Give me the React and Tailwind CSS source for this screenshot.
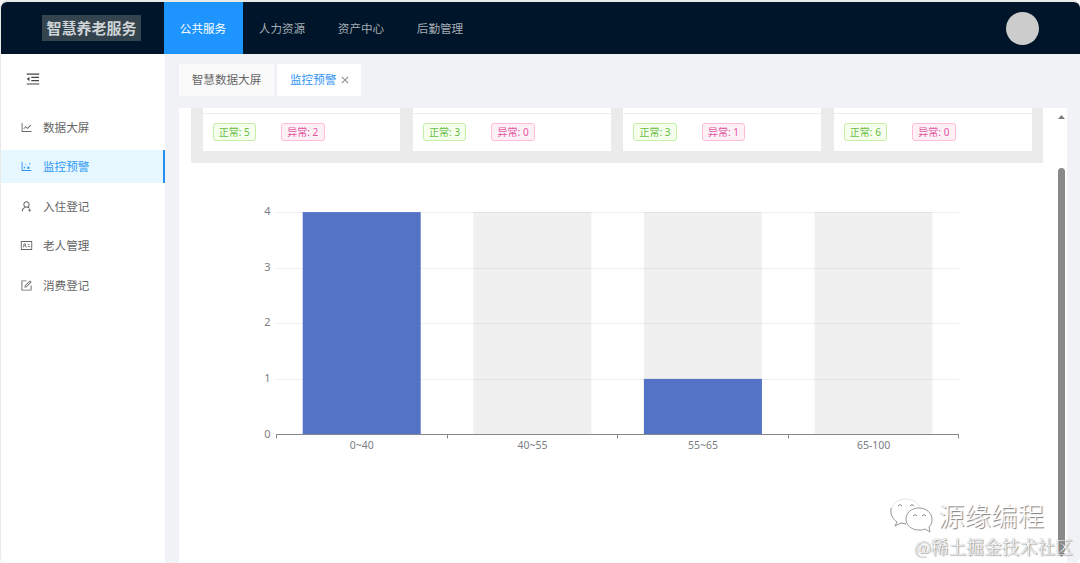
import React, { useState } from 'react';
import {
  AiOutlineMenuFold,
  AiOutlineLineChart,
  AiOutlineDotChart,
  AiOutlineUserAdd,
  AiOutlineIdcard,
  AiOutlineForm,
  AiOutlineClose,
} from 'react-icons/ai';

const topMenus = ['公共服务', '人力资源', '资产中心', '后勤管理'];

const sideMenus = [
  { name: '数据大屏', icon: AiOutlineLineChart },
  { name: '监控预警', icon: AiOutlineDotChart },
  { name: '入住登记', icon: AiOutlineUserAdd },
  { name: '老人管理', icon: AiOutlineIdcard },
  { name: '消费登记', icon: AiOutlineForm },
];

const cards = [
  { normal: 5, abnormal: 2 },
  { normal: 3, abnormal: 0 },
  { normal: 3, abnormal: 1 },
  { normal: 6, abnormal: 0 },
];

const ages = [
  { label: '0~40', value: 4 },
  { label: '40~55', value: 0 },
  { label: '55~65', value: 1 },
  { label: '65-100', value: 0 },
];

const Header = () => {
  const [active, setActive] = useState('公共服务');

  return (
    <header className="flex h-[52px] shrink-0 items-center rounded-t-md bg-[#001529]">
      <div className="flex w-[162.5px] shrink-0 pl-[41px]">
        <div className="flex h-[26px] w-[99px] items-center justify-center bg-[#33444f] text-[15px] font-bold text-[#ced3d6]">
          智慧养老服务
        </div>
      </div>
      <nav className="flex h-full">
        {topMenus.map((name) => (
          <button
            key={name}
            type="button"
            onClick={() => setActive(name)}
            className={`h-full w-[79px] pt-px text-[11.6px] ${
              active === name ? 'bg-[#1e94ff] text-white' : 'text-[#a6adb4]'
            }`}
          >
            {name}
          </button>
        ))}
      </nav>
      <div className="mr-[41px] ml-auto size-[33px] rounded-full bg-[#cccccc]" />
    </header>
  );
};

const Sidebar = () => {
  const [active, setActive] = useState('监控预警');

  return (
    <aside className="w-[164px] shrink-0 bg-white">
      <AiOutlineMenuFold className="mt-[17px] ml-6 size-4 text-[#444]" />
      <ul className="mt-[23.5px] space-y-[6.5px]">
        {sideMenus.map(({ name, icon: Icon }) => (
          <li
            key={name}
            onClick={() => setActive(name)}
            className={`flex h-[33px] cursor-pointer items-center border-r-2 pl-[18.5px] text-[11.6px] ${
              active === name
                ? 'border-[#2490f0] bg-[#e6f7ff] text-[#2f97f5]'
                : 'border-transparent text-[#666]'
            }`}
          >
            <Icon className="mr-[10.5px] size-[13px] shrink-0" />
            <span className="pt-px">{name}</span>
          </li>
        ))}
      </ul>
    </aside>
  );
};

const Tabs = () => (
  <div className="flex h-[53.5px] items-start gap-[3px] pt-2.5 pl-3.5 text-[11.6px]">
    <div className="flex h-8 w-[95px] items-center justify-center bg-[#fafafa] text-[#666]">
      智慧数据大屏
    </div>
    <div className="flex h-8 w-[84px] items-center bg-white pl-[13px] text-[#2f93f5]">
      监控预警
      <AiOutlineClose className="ml-1 size-[10px] text-[#777]" />
    </div>
  </div>
);

const StatusCard = ({ normal, abnormal }) => (
  <div className="h-[43.5px] flex-1 bg-white pt-[5px]">
    <div className="flex gap-[25px] border-t border-[#ededed] pt-[9px] pl-2.5 text-[10px] leading-none">
      <span className="flex h-[18px] w-[43.5px] items-center justify-center rounded-[3px] border border-[#c3eda2] bg-[#f6ffed] text-[#66bd43]">
        正常: {normal}
      </span>
      <span className="flex h-[18px] w-[43.5px] items-center justify-center rounded-[3px] border border-[#ffbbda] bg-[#fff0f6] text-[#e0559f]">
        异常: {abnormal}
      </span>
    </div>
  </div>
);

const AgeChart = () => {
  const left = 85.5;
  const bottom = 271.5;
  const unit = 55.6;
  const step = 170.6;

  return (
    <svg width="852" height="400" className="block shrink-0">
      {[1, 2, 3, 4].map((n) => (
        <line key={n} x1={left} x2="768" y1={Math.round(bottom - n * unit) + 0.5} y2={Math.round(bottom - n * unit) + 0.5} stroke="#eeeff0" />
      ))}
      {ages.map((item, i) => {
        const x = left + i * step + 26.2;
        return (
          <g key={item.label}>
            {item.value < 4 && (
              <rect x={x} y={bottom - 4 * unit} width="118" height={4 * unit} fill="#b4b4b4" fillOpacity="0.2" />
            )}
            <rect x={x} y={bottom - item.value * unit} width="118" height={item.value * unit} fill="#5573c6" />
            <text x={left + (i + 0.5) * step} y="285.5" textAnchor="middle" fontSize="10.5" fill="#7b7d84">
              {item.label}
            </text>
          </g>
        );
      })}
      <path d={`M${left} ${bottom}H768`} stroke="#85878e" />
      {[0, 1, 2, 3, 4].map((n) => (
        <g key={n}>
          <path d={`M${Math.floor(left + n * step) + 0.5} ${bottom}v4`} stroke="#85878e" />
          <text x="79.5" y={bottom - n * unit + 3} textAnchor="end" fontSize="11" fill="#7b7d84">
            {n}
          </text>
        </g>
      ))}
    </svg>
  );
};

const ScrollBar = () => (
  <div className="flex w-2 shrink-0 flex-col items-center pt-[7px] pb-[6px]">
    <svg width="7" height="4" viewBox="0 0 7 4">
      <path d="M0 4L3.5 0L7 4Z" fill="#7c7c7c" />
    </svg>
    <div className="mt-[49px] w-[7px] flex-1 rounded-full bg-[#898989]" />
    <svg width="7" height="4" viewBox="0 0 7 4">
      <path d="M0 0L3.5 4L7 0Z" fill="#7c7c7c" />
    </svg>
  </div>
);

const Watermark = () => (
  <div className="pointer-events-none absolute right-[7px] bottom-[3px] flex flex-col items-end text-white">
    <div className="mr-[29px] flex items-center gap-1">
      <svg width="44" height="36" viewBox="0 0 44 36" fill="white" strokeWidth="1">
        {/* back bubble fades out toward its top */}
        <path
          d="M16 1C7 1 1 7 1 14c0 4 2 7 6 10l-2 4 6-3c7 2 20 0 20-11C31 6 24 1 16 1Z"
          stroke="#e6e6e6"
        />
        <path d="M1 10C0 17 3 21 7 24l-2 4 6-3 5 1" stroke="#999" fill="none" />
        <path
          d="M29 10c-8 0-13 5-13 11s5 11 13 11c2 0 4 0 6-1l5 3-1-5c2-2 3-4 3-8 0-6-6-11-13-11Z"
          stroke="#999"
        />
        <path
          d="M8 8q2-3 4 0M20 8q2-3 4 0M23 18q2-3 4 0M32 18q2-3 4 0"
          stroke="#888"
          fill="none"
        />
      </svg>
      <span className="text-[26.5px] leading-9 font-light [text-shadow:1px_1px_1px_#777]">源缘编程</span>
    </div>
    <span className="font-['Noto_Serif_CJK_SC','Noto_Sans_CJK_SC',serif] text-[17.8px] leading-[26px] font-light [text-shadow:0_0_1px_#777,1px_1px_1px_#999]">
      @稀土掘金技术社区
    </span>
  </div>
);

export default function App() {
  return (
    <div className="relative flex h-[563px] w-[1080px] flex-col overflow-hidden rounded-md border-t-2 border-l border-[#e8eaea] bg-[#f0f2f5] font-['Noto_Sans','Noto_Sans_CJK_SC',sans-serif]">
      <Header />
      <div className="flex min-h-0 flex-1">
        <Sidebar />
        <main className="flex min-w-0 flex-1 flex-col">
          <Tabs />
          <div className="mr-[13px] ml-3.5 flex min-h-0 flex-1 justify-between bg-white pr-0.5 pl-3">
            <div className="w-[852px] overflow-hidden">
              <div className="flex h-[55px] items-start gap-[12.5px] bg-[#ebebeb] px-[11.5px]">
                {cards.map((card, index) => (
                  <StatusCard key={index} {...card} />
                ))}
              </div>
              <AgeChart />
            </div>
            <ScrollBar />
          </div>
        </main>
      </div>
      <Watermark />
    </div>
  );
}
